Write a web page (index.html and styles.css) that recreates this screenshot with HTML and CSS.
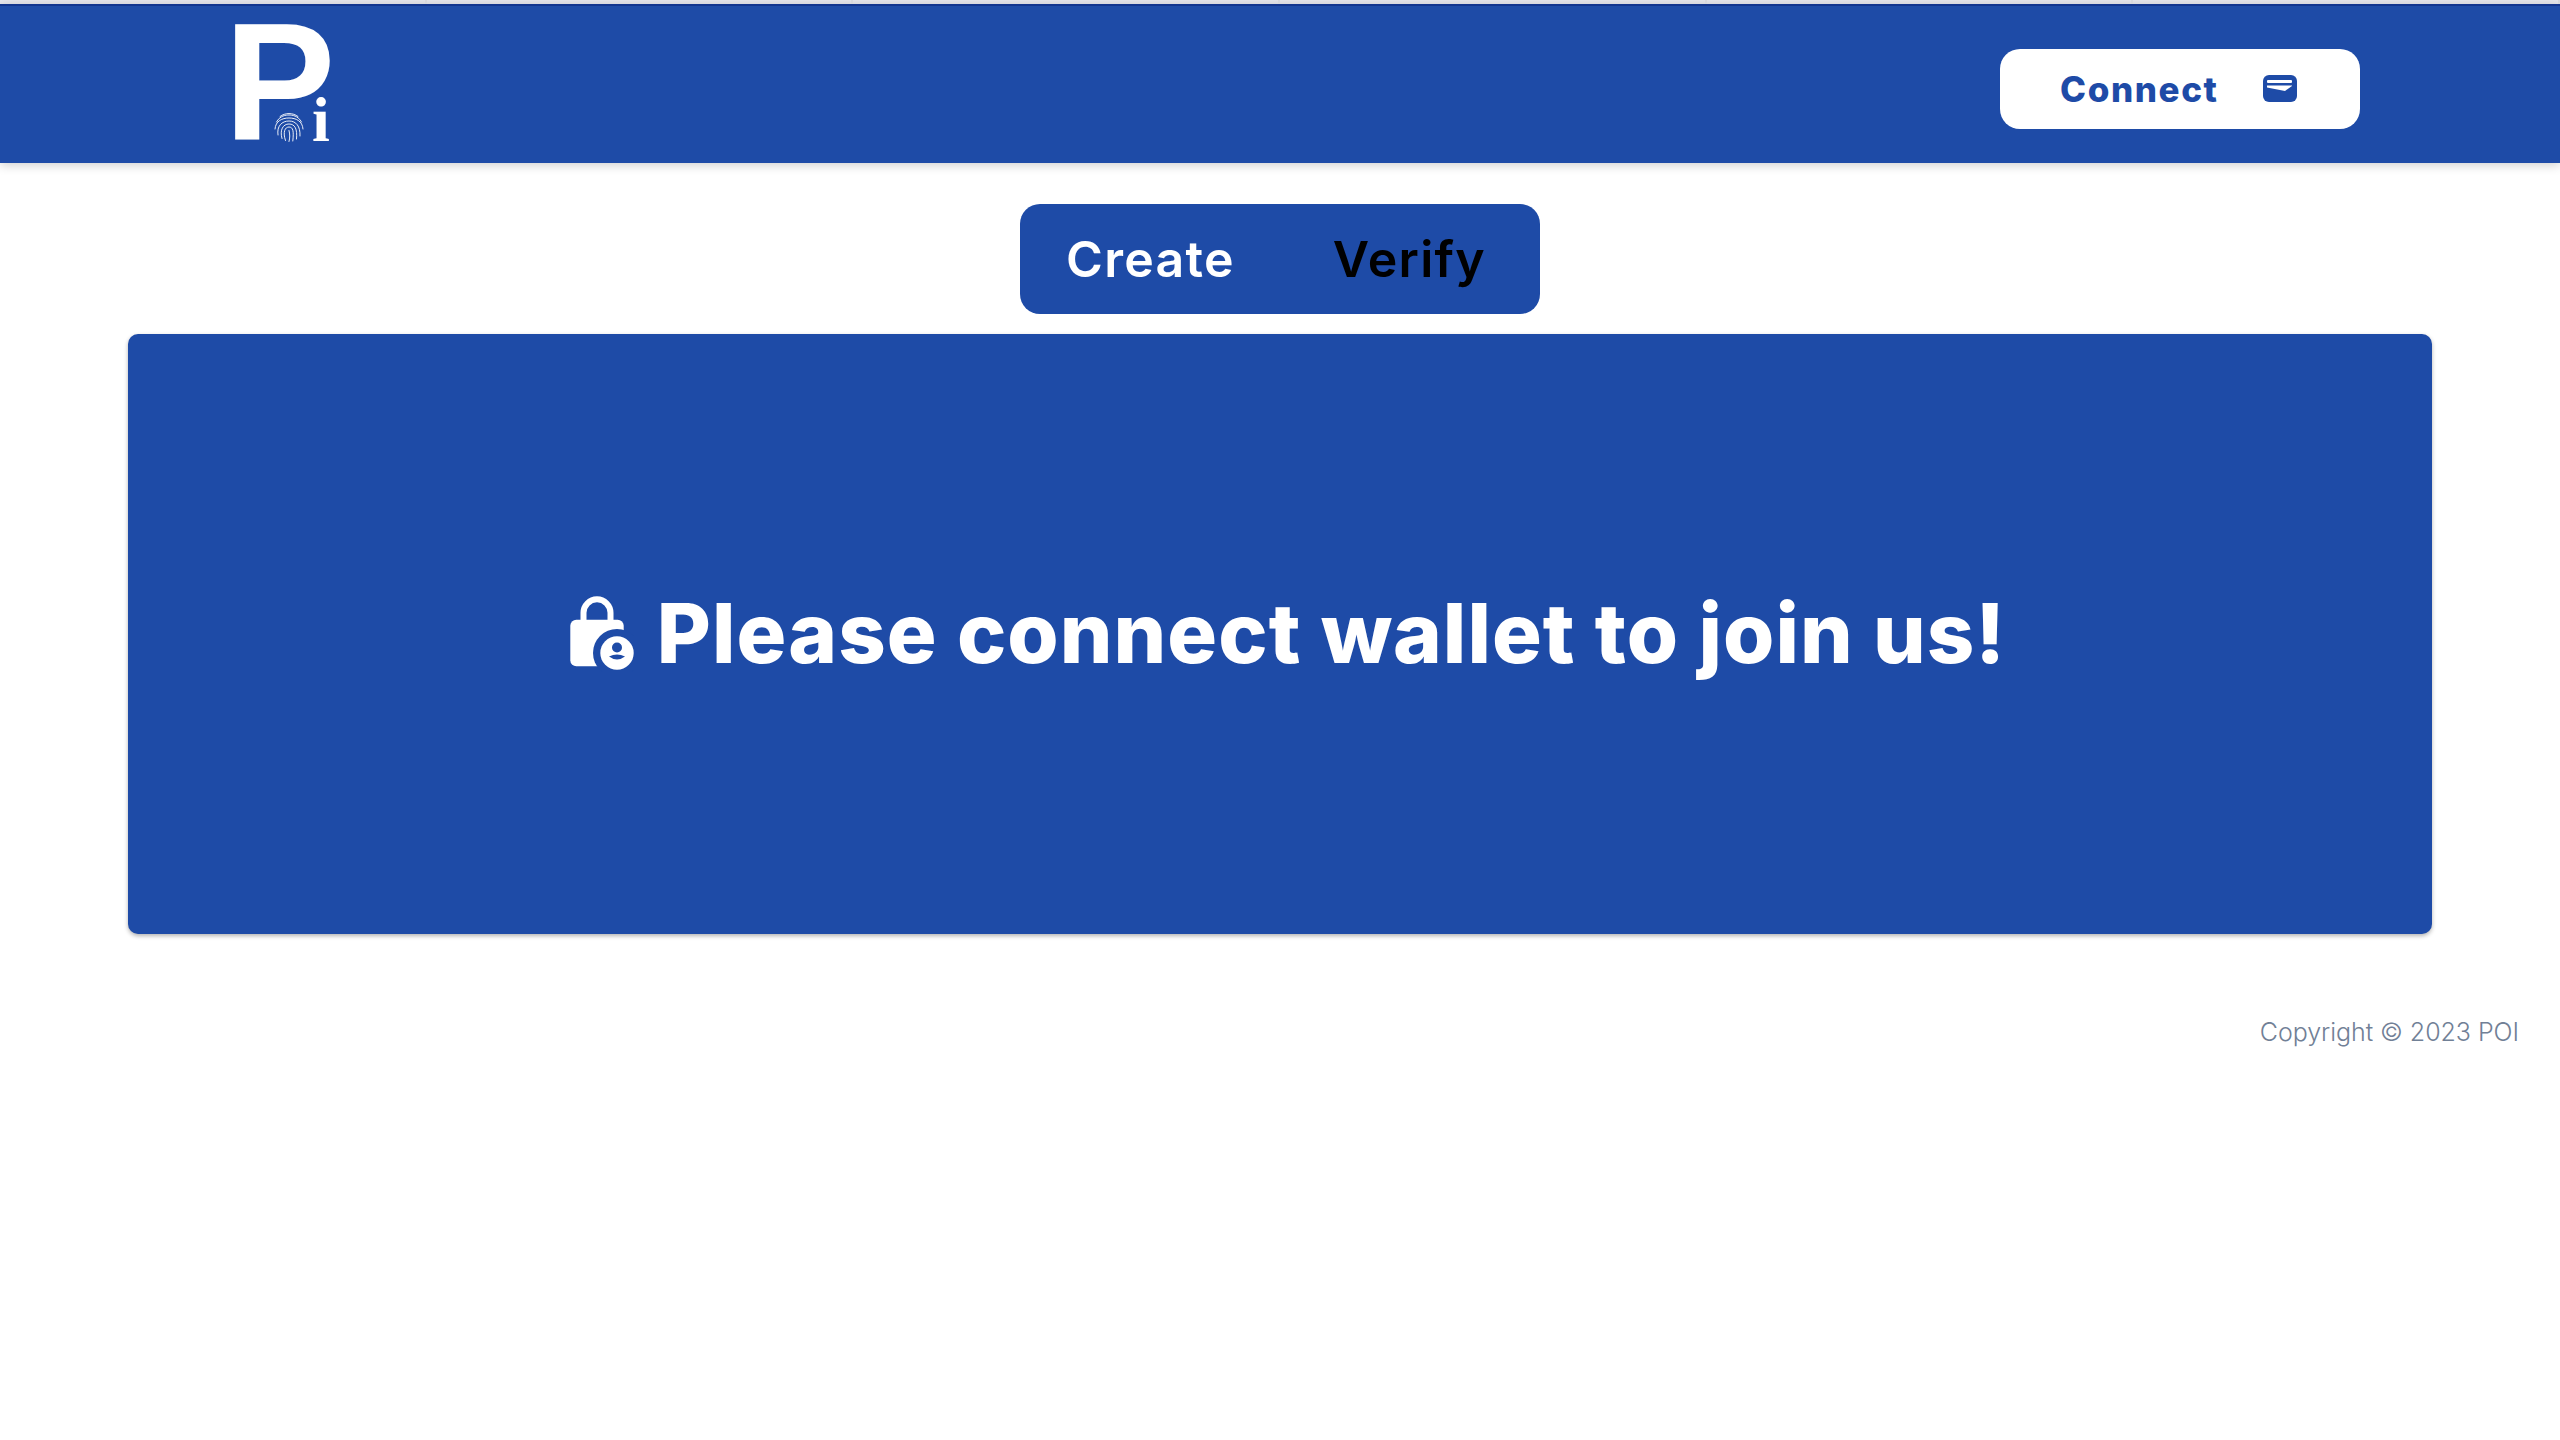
FILE: index.html
```html
<!DOCTYPE html>
<html lang="en">

<head>
    <meta charset="UTF-8">
    <meta name="viewport" content="width=device-width, initial-scale=1.0">
    <title>POI</title>
    <link rel="stylesheet" href="styles.css">
</head>

<body>
    <div class="top-strip">
        <div class="strip-cell"></div>
        <div class="strip-cell"></div>
        <div class="strip-cell"></div>
        <div class="strip-cell"></div>
        <div class="strip-cell"></div>
        <div class="strip-cell"></div>
    </div>

    <header class="header">
        <div class="logo">
            <span class="logo-p">P</span>
            <svg class="logo-print" viewBox="0 0 30 30" fill="none" stroke="#ffffff" stroke-width="0.9" stroke-linecap="round">
                <path d="M6 4.500C11 0.500 19 0.500 24 4.500" />
                <path d="M2.500 10C6 3.500 12 3 15 3S24 3.500 27.500 10" />
                <path d="M1 17C1.500 9 8 6 15 6S28.500 9 29 17" />
                <path d="M4 23C2.500 14 8 9 15 9S26.500 14 26 24" />
                <path d="M8 26.500C5.500 18 9 12 15 12S23.500 17 22.500 27" />
                <path d="M11.500 28.500C8.500 20 11 15 15 15S20 19 18.800 29" />
                <path d="M15 18.500C16 22 16 26 15 29.500" />
            </svg>
            <span class="logo-i">i</span>
        </div>
        <button class="connect-btn">
            <span>Connect</span>
            <svg class="wallet-icon" viewBox="0 0 34 27">
                <rect class="wallet-body" width="34" height="27" rx="6" />
                <rect class="wallet-cut" x="4" y="5" width="25" height="3" rx="1" />
                <path class="wallet-cut" d="M4 10.500H29V11L22 16L4 12.500Z" />
            </svg>
        </button>
    </header>

    <div class="tabs-row">
        <div class="tabs">
            <span class="tab tab-create">Create</span>
            <span class="tab tab-verify">Verify</span>
        </div>
    </div>

    <main class="card">
        <svg class="lock-icon" viewBox="0 0 64 76">
            <path class="lock-shackle" d="M13.500 24V16.800A13.500 13.500 0 0 1 40.500 16.800V24" />
            <rect class="lock-white" x="0.300" y="23.700" width="53.400" height="46.600" rx="6" />
            <circle class="lock-blue" cx="47" cy="57" r="24" />
            <circle class="lock-white" cx="47" cy="57" r="16.700" />
            <circle class="lock-blue" cx="47" cy="51.500" r="5" />
            <path class="lock-blue" d="M39 60.500Q47 56.500 55 60.500Q47 66.500 39 60.500Z" />
        </svg>
        <h1>Please connect wallet to join us!</h1>
    </main>

    <footer class="footer">Copyright © 2023 POI</footer>
</body>

</html>
```

FILE: styles.css
```css
* {
    margin: 0;
    padding: 0;
    box-sizing: border-box;
}

body {
    font-family: 'Inter', sans-serif;
    background-color: #ffffff;
    color: #000000;
}

.top-strip {
    display: flex;
    height: 4px;
    background: #e8e8ee;
}

.strip-cell {
    width: 428px;
    border-right: 2px solid #d8d8dc;
}

.header {
    height: 159px;
    display: flex;
    justify-content: space-between;
    align-items: center;
    padding: 0 200px 0 234px;
    background: #1e4ba7;
    border-top: 2px solid #12358f;
    box-shadow: 0 2px 10px rgba(0, 0, 0, 0.2);
}

.logo {
    position: relative;
    width: 100px;
    height: 116px;
    color: #ffffff;
    margin-top: 5px;
}

.logo-p {
    position: absolute;
    left: -10px;
    top: -22px;
    font-family: 'Liberation Sans', sans-serif;
    font-size: 167px;
    font-weight: 700;
    line-height: 0.9;
}

.logo-i {
    position: absolute;
    left: 78px;
    top: 59px;
    font-family: 'Liberation Serif', serif;
    font-size: 64px;
    font-weight: 700;
    line-height: 1;
}

.logo-print {
    position: absolute;
    left: 40px;
    top: 83px;
    width: 30px;
    height: 30px;
}

.connect-btn {
    width: 360px;
    height: 80px;
    margin-top: 8px;
    display: flex;
    align-items: center;
    padding-left: 60px;
    gap: 44px;
    background: #ffffff;
    color: #1e4ba7;
    border: none;
    border-radius: 20px;
    font-family: 'Inter', sans-serif;
    font-size: 35px;
    font-weight: 800;
    letter-spacing: 1.6px;
}

.wallet-icon {
    width: 34px;
    height: 27px;
}

.wallet-body {
    fill: #1e4ba7;
}

.wallet-cut {
    fill: #ffffff;
}

.tabs-row {
    display: flex;
    justify-content: center;
    margin-top: 41px;
}

.tabs {
    width: 520px;
    height: 110px;
    display: flex;
    align-items: center;
    justify-content: space-between;
    padding: 0 54px 0 46px;
    background: #1e4ba7;
    border-radius: 20px;
}

.tab {
    font-size: 50px;
    font-weight: 600;
    letter-spacing: 1.3px;
}

.tab-create {
    color: #ffffff;
}

.tab-verify {
    color: #000000;
}

.card {
    height: 600px;
    margin: 20px 128px 0;
    display: flex;
    align-items: center;
    justify-content: center;
    gap: 23px;
    padding-left: 16px;
    background: #1e4ba7;
    border-radius: 10px;
    box-shadow: 0 2px 4px rgba(0, 0, 0, 0.3);
}

.lock-icon {
    width: 64px;
    height: 76px;
}

.lock-shackle {
    fill: none;
    stroke: #ffffff;
    stroke-width: 6;
}

.lock-white {
    fill: #ffffff;
}

.lock-blue {
    fill: #1e4ba7;
}

h1 {
    font-size: 83px;
    font-weight: 800;
    line-height: 1.2;
    color: #ffffff;
    letter-spacing: 1.05px;
}

.footer {
    margin-top: 83px;
    padding-right: 41px;
    text-align: right;
    font-size: 25px;
    font-weight: 300;
    letter-spacing: -0.05px;
    color: #718096;
}
```
